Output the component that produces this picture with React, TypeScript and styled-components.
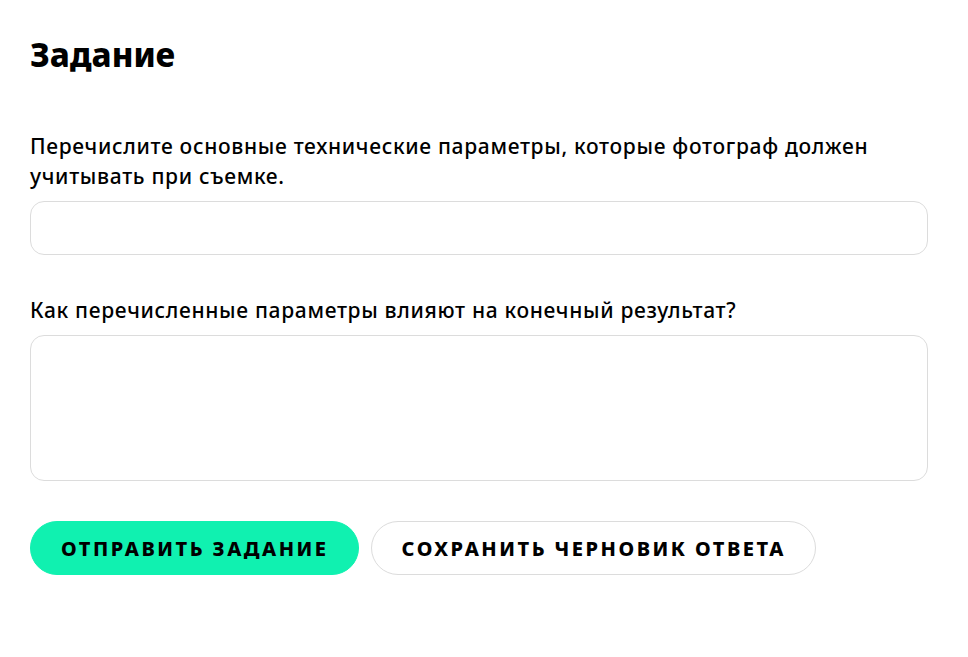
import React from "react";
import styled, { createGlobalStyle } from "styled-components";

const Global = createGlobalStyle`
  html, body { margin: 0; padding: 0; background: #ffffff; }
  body { font-family: "Noto Sans", "Liberation Sans", sans-serif; color: #000; }
  * { box-sizing: border-box; }
`;

const Page = styled.div`
  padding: 35px 40px 60px 30px;
  display: flex;
  flex-direction: column;
`;

const Title = styled.h1`
  margin: 0 0 56px 0;
  font-size: 33px;
  line-height: 40px;
  font-weight: 800;
`;

const Field = styled.div`
  display: flex;
  flex-direction: column;
  gap: 10px;
  margin-bottom: 40px;
`;

const Label = styled.label`
  font-size: 21px;
  line-height: 30px;
  font-weight: 500;
  letter-spacing: 0.68px;
  max-width: 890px;
`;

const Input = styled.input`
  width: 898px;
  height: 54px;
  border: 1px solid #dcdcdc;
  border-radius: 14px;
  padding: 0 18px;
  font: inherit;
  outline: none;
`;

const Area = styled.textarea`
  width: 898px;
  height: 146px;
  border: 1px solid #dcdcdc;
  border-radius: 14px;
  padding: 14px 18px;
  font: inherit;
  resize: none;
  outline: none;
  display: block;
`;

const Buttons = styled.div`
  display: flex;
  gap: 12px;
`;

const Button = styled.button<{ $primary?: boolean }>`
  height: 54px;
  padding: 0 29px 0 30px;
  border-radius: 27px;
  border: 1px solid ${(p) => (p.$primary ? "#10f1b0" : "#dcdcdc")};
  background: ${(p) => (p.$primary ? "#10f1b0" : "#ffffff")};
  color: #000;
  font-family: "Noto Sans", "Liberation Sans", sans-serif;
  font-weight: 800;
  font-size: 20px;
  letter-spacing: 2.5px;
  text-transform: uppercase;
  cursor: pointer;
`;

export default function App() {
  return (
    <>
      <Global />
      <Page>
        <Title>Задание</Title>
        <Field>
          <Label>
            Перечислите основные технические параметры, которые фотограф должен учитывать при съемке.
          </Label>
          <Input />
        </Field>
        <Field>
          <Label>Как перечисленные параметры влияют на конечный результат?</Label>
          <Area />
        </Field>
        <Buttons>
          <Button $primary>Отправить задание</Button>
          <Button>Сохранить черновик ответа</Button>
        </Buttons>
      </Page>
    </>
  );
}
